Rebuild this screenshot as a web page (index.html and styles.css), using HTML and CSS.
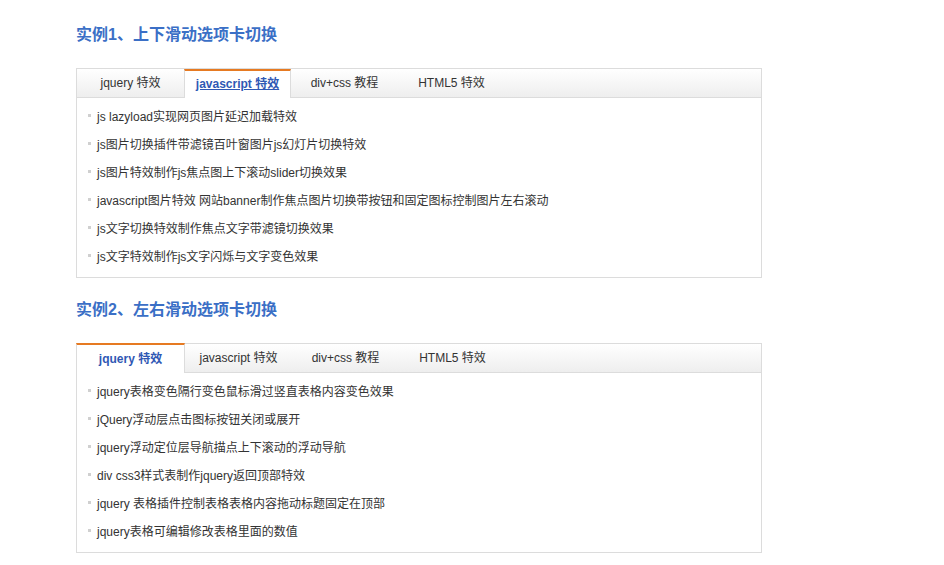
FILE: index.html
```html
<!DOCTYPE html>
<html lang="zh-CN">
<head>
<meta charset="utf-8">
<title>选项卡切换</title>
<link rel="stylesheet" href="styles.css">
</head>
<body>
<div class="page">
  <h2 class="title">实例1、上下滑动选项卡切换</h2>
  <div class="box">
    <div class="tabs">
      <span class="tab">jquery 特效</span>
      <span class="tab active hover">javascript 特效</span>
      <span class="tab">div+css 教程</span>
      <span class="tab">HTML5 特效</span>
    </div>
    <ul class="list">
      <li>js lazyload实现网页图片延迟加载特效</li>
      <li>js图片切换插件带滤镜百叶窗图片js幻灯片切换特效</li>
      <li>js图片特效制作js焦点图上下滚动slider切换效果</li>
      <li>javascript图片特效 网站banner制作焦点图片切换带按钮和固定图标控制图片左右滚动</li>
      <li>js文字切换特效制作焦点文字带滤镜切换效果</li>
      <li>js文字特效制作js文字闪烁与文字变色效果</li>
    </ul>
  </div>

  <h2 class="title">实例2、左右滑动选项卡切换</h2>
  <div class="box">
    <div class="tabs">
      <span class="tab active first">jquery 特效</span>
      <span class="tab">javascript 特效</span>
      <span class="tab">div+css 教程</span>
      <span class="tab">HTML5 特效</span>
    </div>
    <ul class="list">
      <li>jquery表格变色隔行变色鼠标滑过竖直表格内容变色效果</li>
      <li>jQuery浮动层点击图标按钮关闭或展开</li>
      <li>jquery浮动定位层导航描点上下滚动的浮动导航</li>
      <li>div css3样式表制作jquery返回顶部特效</li>
      <li>jquery 表格插件控制表格表格内容拖动标题固定在顶部</li>
      <li>jquery表格可编辑修改表格里面的数值</li>
    </ul>
  </div>
</div>
</body>
</html>
```

FILE: styles.css
```css
html, body {
  margin: 0;
  padding: 0;
  background: #fff;
}
body {
  font-family: "Liberation Sans", Arial, "Noto Sans CJK SC", sans-serif;
  font-size: 12px;
  color: #333;
}
.page {
  padding: 23px 0 0 76px;
}
.title {
  margin: 0 0 21px;
  height: 24px;
  line-height: 24px;
  font-size: 16px;
  font-weight: bold;
  color: #3b6fc6;
}
.box {
  width: 684px;
  border: 1px solid #dcdcdc;
  margin-bottom: 20px;
}
.tabs {
  display: flex;
  height: 28px;
  background: linear-gradient(#ffffff, #eeeeee);
  border-bottom: 1px solid #dcdcdc;
}
.tab {
  box-sizing: border-box;
  width: 107px;
  height: 28px;
  line-height: 28px;
  text-align: center;
  color: #333;
}
.tab.active {
  height: 29px;
  line-height: 27px;
  margin-bottom: -1px;
  background: #fff;
  border-top: 2px solid #e67a22;
  border-left: 1px solid #dcdcdc;
  border-right: 1px solid #dcdcdc;
  color: #2f58b4;
  font-weight: bold;
}
.tab.active.first {
  margin-left: -1px;
  margin-top: -1px;
  height: 30px;
  line-height: 28px;
  width: 109px;
}
.tab.hover {
  text-decoration: underline;
}
.list {
  list-style: none;
  margin: 0;
  padding: 3px 0 8px;
}
.list li {
  display: flex;
  align-items: center;
  height: 28px;
  padding-left: 11px;
  white-space: nowrap;
}
.list li::before {
  content: "";
  display: inline-block;
  width: 3px;
  height: 3px;
  margin-right: 6px;
  background: #d0d0d0;
}
```
